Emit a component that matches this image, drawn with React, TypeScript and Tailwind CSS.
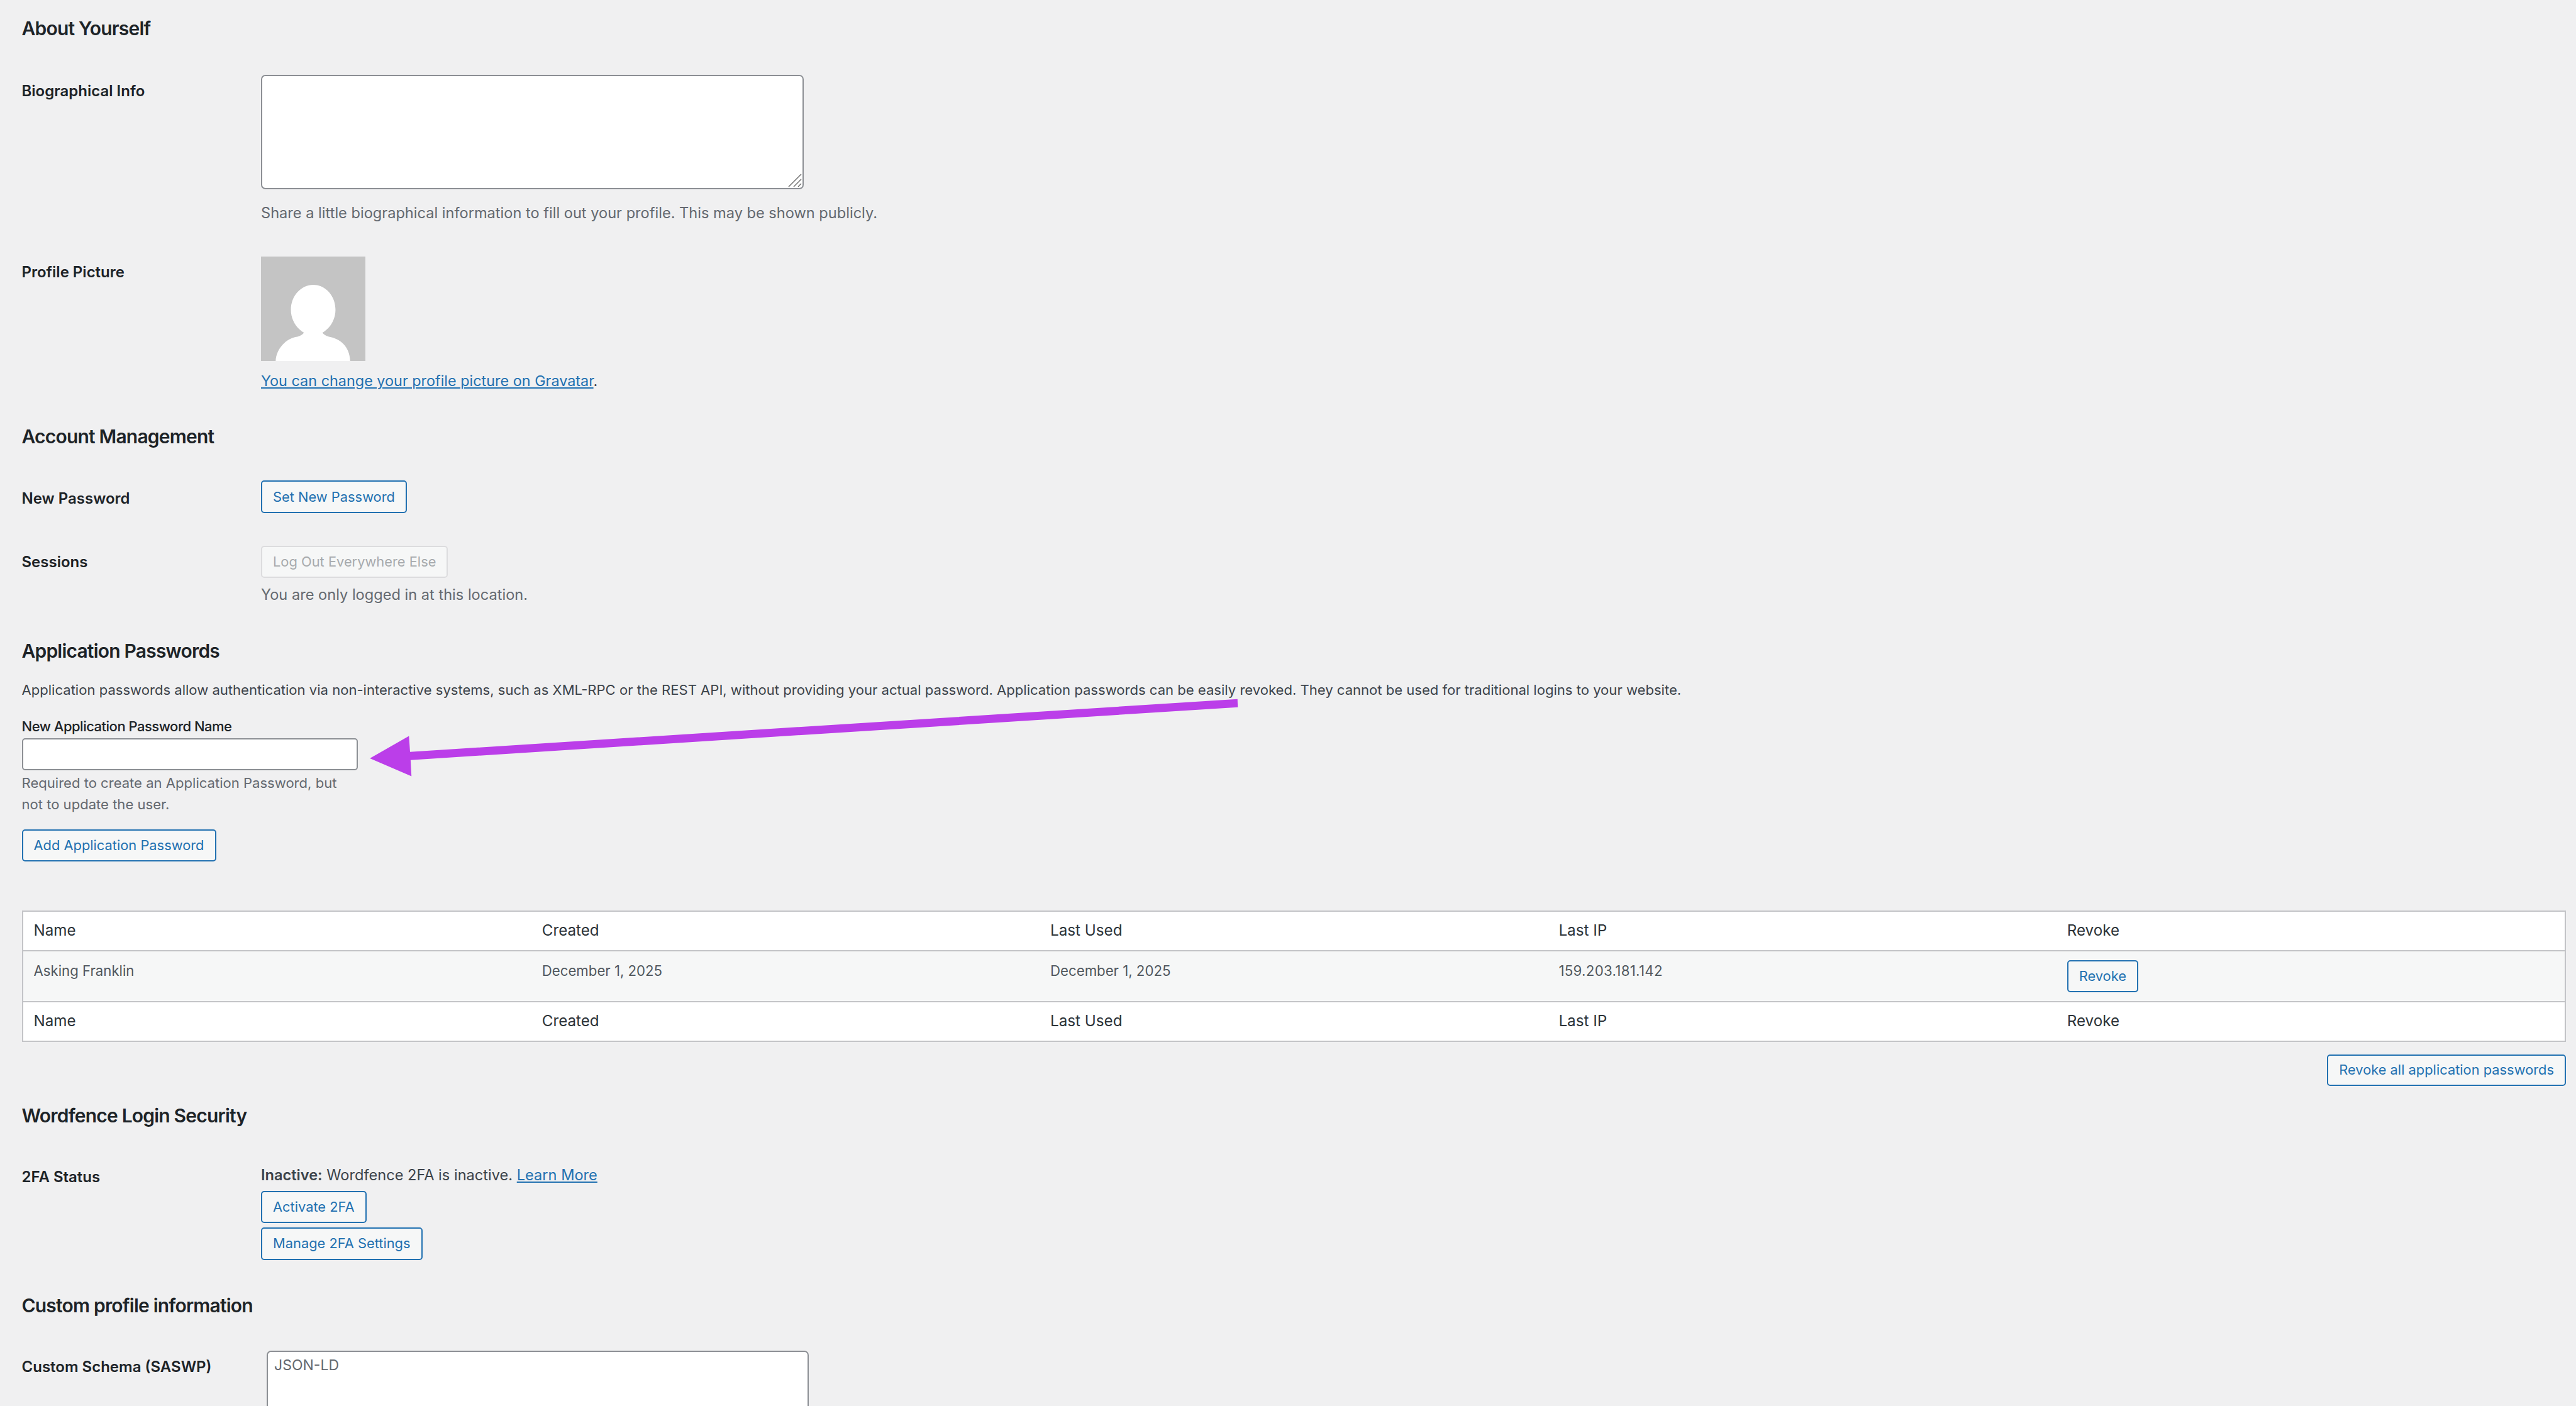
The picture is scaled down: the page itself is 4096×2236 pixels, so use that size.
import React from 'react';

const btn = 'inline-flex items-center justify-center rounded-[5px] border-2 border-[#2271b1] bg-[#f6f7f7] text-[21.85px] text-[#2271b1] px-[17px]';
const h2 = 'text-[30px] leading-[40px] tracking-[-0.8px] font-semibold text-[#1d2327]';
const label = 'text-[24px] leading-[30px] font-semibold text-[#1d2327]';
const desc = 'text-[23.6px] leading-[34px] text-[#646970]';

const columns = ['Name', 'Created', 'Last Used', 'Last IP', 'Revoke'];

const HeadRow = ({ className }: { className: string }) => (
  <div className={`grid grid-cols-5 h-[61px] items-center bg-white ${className}`}>
    {columns.map((col) => (
      <div key={col} className="px-[17px] text-[24.2px] text-[#2c3338]">{col}</div>
    ))}
  </div>
);

const Avatar = () => (
  <svg viewBox="0 0 192 192" className="block w-[166px] h-[166px]">
    <rect width="192" height="192" fill="#c4c4c4" />
    <path fill="#fff" d="M96 52C118 52 137 72 137 98C137 116 127 132 113 140C115 143 119 146 125 147.5C145 151 163 165 164 192L27 192C28 170 46 150 67 147.5C73 146 77 143 79 140C65 132 55 116 55 98C55 72 74 52 96 52Z" />
  </svg>
);

const App: React.FC = () => {
  return (
    <div className="relative w-[4096px] h-[2236px] overflow-hidden bg-[#f0f0f1] pl-[34.5px] pr-[16px] pt-[25px] font-[family-name:Inter,sans-serif]">
      {/* About Yourself */}
      <h2 className={h2}>About Yourself</h2>

      <div className="flex mt-[54px]">
        <div className={`${label} w-[380.5px] pt-[11px]`}>Biographical Info</div>
        <div>
          <div className="relative w-[863px] h-[182px]">
            <textarea className="block w-full h-full resize-none rounded-[7px] border-2 border-[#8c8f94] bg-white" />
            <svg viewBox="0 0 22 22" className="absolute right-[3px] bottom-[3px] w-[22px] h-[22px]">
              <path d="M1 21L21 1M9 21L21 9M16 21L21 16" stroke="#6b6b6b" strokeWidth="1.4" fill="none" />
            </svg>
          </div>
          <p className={`${desc} mt-[21px]`}>Share a little biographical information to fill out your profile. This may be shown publicly.</p>
        </div>
      </div>

      <div className="flex mt-[52px]">
        <div className={`${label} w-[380.5px] pt-[10px]`}>Profile Picture</div>
        <div>
          <Avatar />
          <p className="text-[23.4px] leading-[34px] mt-[15px] text-[#3c434a]">
            <a className="text-[#2271b1] underline">You can change your profile picture on Gravatar</a>.
          </p>
        </div>
      </div>

      {/* Account Management */}
      <h2 className={`${h2} mt-[50.6px]`}>Account Management</h2>

      <div className="flex mt-[50.4px]">
        <div className={`${label} w-[380.5px] pt-[14px]`}>New Password</div>
        <button className={`${btn} h-[52px]`}>Set New Password</button>
      </div>

      <div className="flex mt-[52px]">
        <div className={`${label} w-[380.5px] pt-[10.6px]`}>Sessions</div>
        <div>
          <button className="inline-flex items-center justify-center h-[51px] rounded-[5px] border-2 border-[#dcdcde] bg-[#f6f7f7] text-[21.85px] text-[#a7aaad] px-[17px]">Log Out Everywhere Else</button>
          <p className={`${desc} mt-[9.6px]`}>You are only logged in at this location.</p>
        </div>
      </div>

      {/* Application Passwords */}
      <h2 className={`${h2} mt-[52px]`}>Application Passwords</h2>
      <p className="text-[22.07px] leading-[34px] text-[#3c434a] mt-[25px]">
        Application passwords allow authentication via non-interactive systems, such as XML-RPC or the REST API, without providing your actual password. Application passwords can be easily revoked. They cannot be used for traditional logins to your website.
      </p>
      <div className="text-[22px] leading-[30px] font-medium tracking-[-0.5px] text-[#1d2327] mt-[26px]">New Application Password Name</div>
      <input type="text" className="block mt-[4px] w-[534px] h-[51.4px] rounded-[5px] border-2 border-[#8c8f94] bg-white" />
      <p className="text-[22.07px] leading-[33.6px] text-[#646970] mt-[4.2px]">
        Required to create an Application Password, but<br />not to update the user.
      </p>
      <button className={`${btn} h-[51.4px] mt-[22.2px]`}>Add Application Password</button>

      {/* Passwords table */}
      <div className="mt-[78px] border-2 border-[#c3c4c7]">
        <HeadRow className="border-b-2 border-[#c3c4c7] box-content" />
        <div className="grid grid-cols-5 h-[79px] bg-[#f6f7f7] text-[22.2px] leading-[30px] text-[#50575e]">
          <div className="px-[17px] pt-[16px]">Asking Franklin</div>
          <div className="px-[17px] pt-[16px]">December 1, 2025</div>
          <div className="px-[17px] pt-[16px]">December 1, 2025</div>
          <div className="px-[17px] pt-[16px] tracking-[0.33px]">159.203.181.142</div>
          <div className="px-[17px] pt-[13.6px]">
            <button className={`${btn} h-[51px]`}>Revoke</button>
          </div>
        </div>
        <HeadRow className="border-t-2 border-[#c3c4c7] box-content" />
      </div>

      <div className="flex justify-end mt-[19.6px]">
        <button className={`${btn} h-[50.4px]`}>Revoke all application passwords</button>
      </div>

      {/* Wordfence */}
      <h2 className={`${h2} mt-[27px]`}>Wordfence Login Security</h2>
      <div className="flex mt-[58px]">
        <div className={`${label} w-[380.5px] pt-[5px]`}>2FA Status</div>
        <div className="flex flex-col items-start">
          <p className="text-[23.6px] leading-[34px] text-[#3c434a]">
            <strong className="font-semibold">Inactive:</strong> Wordfence 2FA is inactive. <a className="text-[#2271b1] underline">Learn More</a>
          </p>
          <button className={`${btn} h-[50.5px] mt-[8.5px]`}>Activate 2FA</button>
          <button className={`${btn} h-[51.7px] mt-[7px]`}>Manage 2FA Settings</button>
        </div>
      </div>

      {/* Custom profile */}
      <h2 className={`${h2} mt-[52.3px]`}>Custom profile information</h2>
      <div className="flex mt-[52px]">
        <div className={`${label} w-[389.5px] pt-[11px]`}>Custom Schema (SASWP)</div>
        <textarea
          placeholder="JSON-LD"
          className="block w-[861.5px] h-[182px] resize-none rounded-[7px] border-2 border-[#8c8f94] bg-white px-[10px] pt-[4px] text-[23px] leading-[34px] placeholder:text-[#646970]"
        />
      </div>

      {/* Annotation arrow */}
      <svg viewBox="0 0 4744 2590" className="absolute left-0 top-0 w-[4096px] h-[2236px] pointer-events-none">
        <path fill="#bb3ee9" d="M681 1397L753 1355.7L755 1385L2279 1287.7L2279.5 1302.7L756 1400L757.6 1430Z" />
      </svg>
    </div>
  );
};

export default App;
